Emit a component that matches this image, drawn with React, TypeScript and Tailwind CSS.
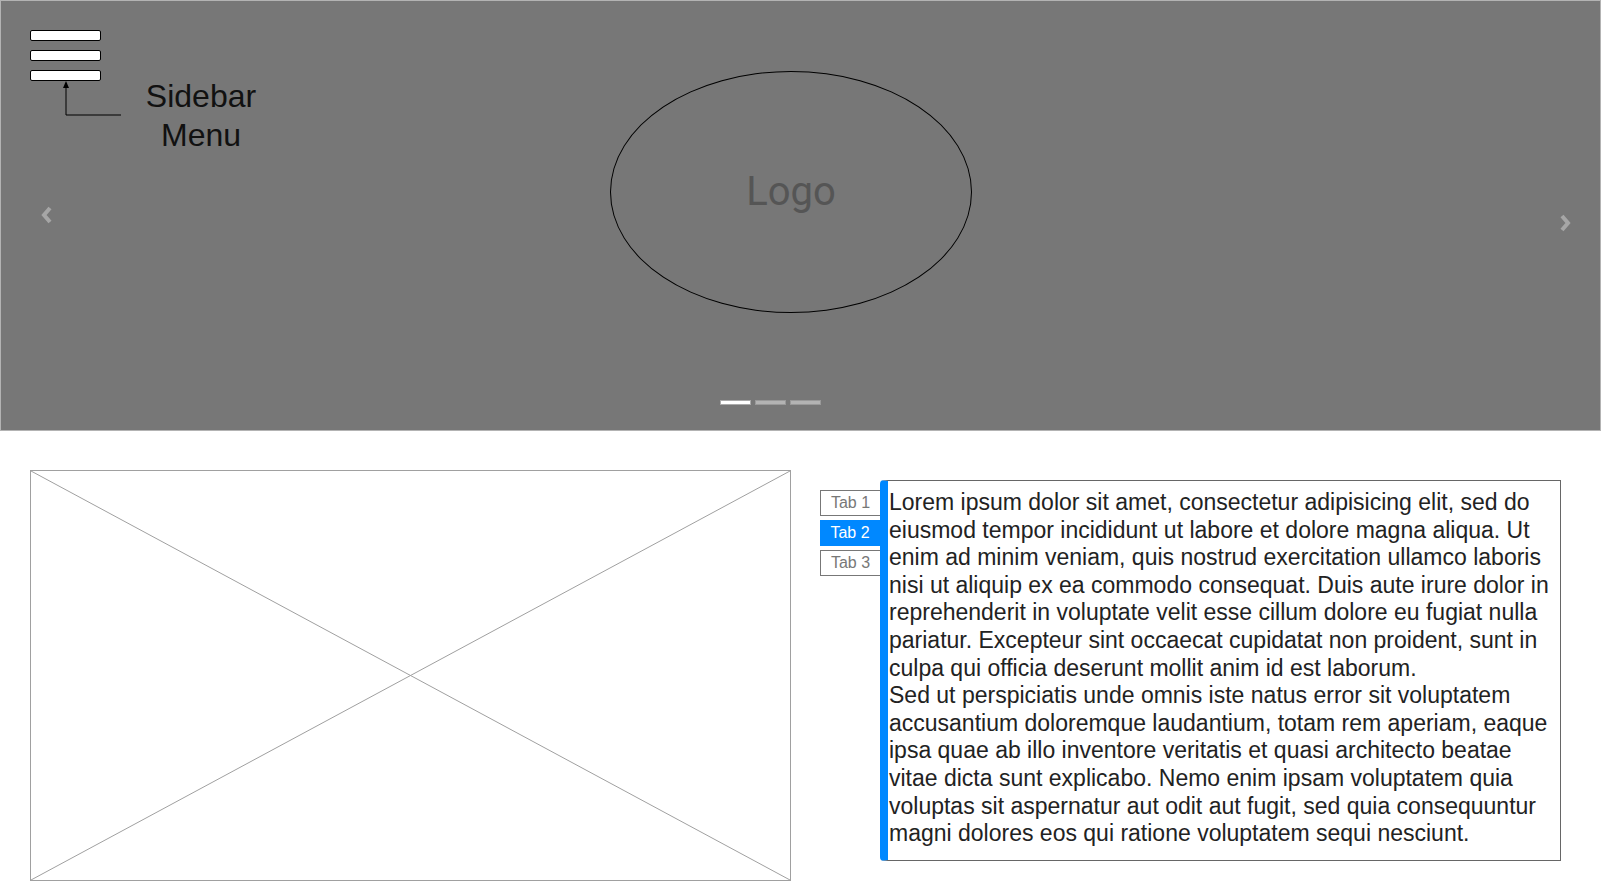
import React, { useState } from "react";

const tabs = ["Tab 1", "Tab 2", "Tab 3"];

const Chevron = ({ dir }: { dir: "left" | "right" }) => (
  <svg width="14" height="20" viewBox="0 0 14 20" fill="none">
    <polyline
      points={dir === "left" ? "10,3 4,10 10,17" : "4,3 10,10 4,17"}
      stroke="#a6a6a6"
      strokeWidth="4"
      strokeLinejoin="miter"
    />
  </svg>
);

const App = () => {
  const [activeTab, setActiveTab] = useState(1);

  return (
    <div className="w-[1601px] min-h-[881px] bg-white font-['Liberation_Sans',Arial,sans-serif]">
      {/* Carousel header */}
      <div className="relative h-[431px] w-[1601px] border border-[#b3b3b3] bg-[#777777]">
        {/* Sidebar toggle */}
        <div className="absolute left-[29px] top-[29px] flex flex-col gap-[9px]">
          <div className="h-[11px] w-[71px] rounded-[2px] border border-black bg-white" />
          <div className="h-[11px] w-[71px] rounded-[2px] border border-black bg-white" />
          <div className="h-[11px] w-[71px] rounded-[2px] border border-black bg-white" />
        </div>

        {/* Annotation arrow */}
        <svg
          className="absolute left-[54px] top-[77px]"
          width="70"
          height="40"
          viewBox="0 0 70 40"
          fill="none"
        >
          <polyline points="11,8 11,37 66,37" stroke="#000" strokeWidth="1" />
          <polygon points="11,3 8,10 14,10" fill="#000" />
        </svg>
        <div className="absolute left-[139px] top-[76px] w-[122px] text-center text-[32px] leading-[38.6px] text-[#111]">
          Sidebar
          <br />
          Menu
        </div>

        {/* Logo */}
        <div className="absolute left-[609px] top-[70px] flex h-[242px] w-[362px] items-center justify-center rounded-[50%] border border-black">
          <span className="font-['Roboto',Arial,sans-serif] text-[40px] text-[#555555]">
            Logo
          </span>
        </div>

        {/* Prev / next */}
        <div className="absolute left-[39px] top-[204px]">
          <Chevron dir="left" />
        </div>
        <div className="absolute left-[1557px] top-[212px]">
          <Chevron dir="right" />
        </div>

        {/* Indicators */}
        <div className="absolute left-[719px] top-[399px] flex gap-[4px]">
          <div className="h-[5px] w-[31px] border border-[#aaaaaa] bg-white" />
          <div className="h-[5px] w-[31px] border border-[#999999] bg-[#b3b3b3]" />
          <div className="h-[5px] w-[31px] border border-[#999999] bg-[#b3b3b3]" />
        </div>
      </div>

      {/* Content */}
      <div className="flex pl-[30px] pt-[39px]">
        {/* Image placeholder */}
        <div className="h-[411px] w-[761px] border border-[#a0a0a0]">
          <svg width="759" height="409" viewBox="0 0 759 409" className="block">
            <line x1="0" y1="0" x2="759" y2="409" stroke="#a0a0a0" strokeWidth="1" />
            <line x1="759" y1="0" x2="0" y2="409" stroke="#a0a0a0" strokeWidth="1" />
          </svg>
        </div>

        {/* Tabs */}
        <div className="ml-[29px] mt-[10px] flex">
          <div className="mt-[10px] flex w-[60px] flex-col gap-[4px]">
            {tabs.map((t, i) => (
              <button
                key={t}
                onClick={() => setActiveTab(i)}
                className={
                  i === activeTab
                    ? "h-[26px] w-[60px] bg-[#0088ff] text-[16px] leading-[26px] text-white"
                    : "h-[26px] w-[60px] border border-r-0 border-[#777777] bg-white text-[16px] leading-[24px] text-[#777777]"
                }
              >
                {t}
              </button>
            ))}
          </div>
          <div className="h-[381px] w-[681px] rounded-l-[4px] border border-l-[8px] border-[#666666] border-l-[#0088ff] pl-[1px] pr-[4px] pt-[8px] text-[23px] leading-[27.6px] text-[#222222]">
            <p>
              Lorem ipsum dolor sit amet, consectetur adipisicing elit, sed do
              eiusmod tempor incididunt ut labore et dolore magna aliqua. Ut
              enim ad minim veniam, quis nostrud exercitation ullamco laboris
              nisi ut aliquip ex ea commodo consequat. Duis aute irure dolor in
              reprehenderit in voluptate velit esse cillum dolore eu fugiat
              nulla pariatur. Excepteur sint occaecat cupidatat non proident,
              sunt in culpa qui officia deserunt mollit anim id est laborum.
            </p>
            <p>
              Sed ut perspiciatis unde omnis iste natus error sit voluptatem
              accusantium doloremque laudantium, totam rem aperiam, eaque ipsa
              quae ab illo inventore veritatis et quasi architecto beatae vitae
              dicta sunt explicabo. Nemo enim ipsam voluptatem quia voluptas
              sit aspernatur aut odit aut fugit, sed quia consequuntur magni
              dolores eos qui ratione voluptatem sequi nesciunt.
            </p>
          </div>
        </div>
      </div>
    </div>
  );
};

export default App;
